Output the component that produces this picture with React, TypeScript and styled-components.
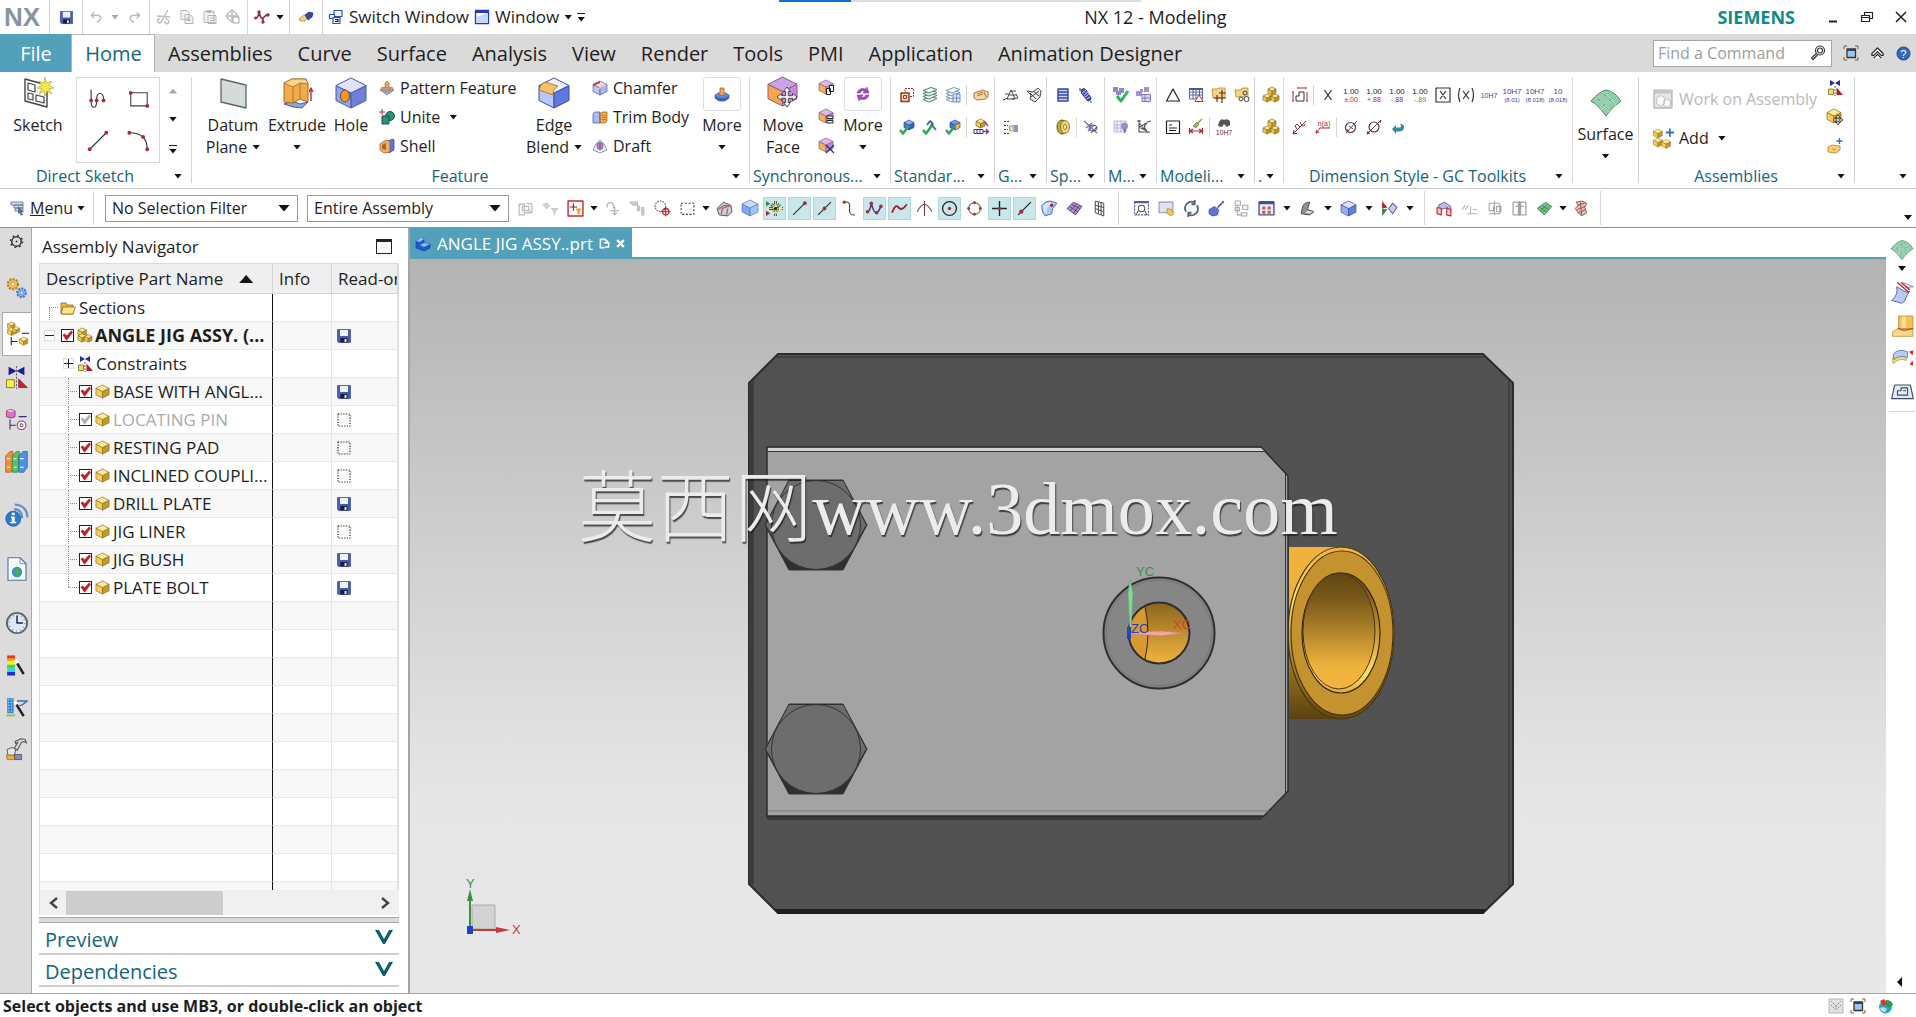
import React, { ReactNode } from "react";
import styled, { createGlobalStyle, css } from "styled-components";

const ink = "#1e1e1e";
const teal = "#14657a";
const tabBlue = "#52a0b9";
const line = "#d5d5d5";

const Global = createGlobalStyle`
  * { box-sizing: border-box; }
  html, body { margin: 0; }
  body {
    font-family: "Open Sans", "Noto Sans", "Liberation Sans", sans-serif;
    font-size: 16px;
    color: ${ink};
    background: #fff;
    overflow: hidden;
  }
  button, input, select { font: inherit; color: inherit; }
  button { background: none; border: 0; padding: 0; margin: 0; cursor: pointer; }
`;

/* ---------- drawing helpers ---------- */

const Glyph = styled.svg<{ $size: number }>`
  display: block;
  flex: none;
  width: ${(p) => p.$size}px;
  height: ${(p) => p.$size}px;
  overflow: visible;
  fill: none;
  stroke-linejoin: round;
`;

const cube = (x: number, y: number, s: number, top: string, left: string, right: string, edge: string) => {
  const h = s / 2;
  const q = s / 4;
  return (
    <g stroke={edge} strokeWidth={s > 20 ? 1 : 0.7}>
      <path fill={left} d={`M${x} ${y + q}L${x + h} ${y + h}V${y + s}L${x} ${y + s - q}Z`} />
      <path fill={right} d={`M${x + s} ${y + q}L${x + h} ${y + h}V${y + s}L${x + s} ${y + s - q}Z`} />
      <path fill={top} d={`M${x} ${y + q}L${x + h} ${y}L${x + s} ${y + q}L${x + h} ${y + h}Z`} />
    </g>
  );
};
const goldCube = (x: number, y: number, s: number) => cube(x, y, s, "#fdeb9a", "#f3cf52", "#c9982a", "#8a6a1c");
const blueCube = (x: number, y: number, s: number) => cube(x, y, s, "#dbe4fb", "#92aef0", "#5f7fd6", "#3f51a5");
const mixCube = (x: number, y: number, s: number) => cube(x, y, s, "#d9b9ec", "#f6b04d", "#c28ade", "#8d5a86");

const label = (t: string, y: number, size: number, fill: string, x = 8) => (
  <text x={x} y={y} fontSize={size} textAnchor="middle" fill={fill} stroke="none" fontFamily="Liberation Sans, Arial, sans-serif">
    {t}
  </text>
);

const dot = (x: number, y: number, r = 1.4, c = "#a92c33") => <circle cx={x} cy={y} r={r} fill={c} stroke="none" />;

const sheets = (c: string) => (
  <g stroke={c} strokeWidth=".9" fill="#f4f8f4">
    <path d="M1 12.5l8-3 6 2-8 3.5z" />
    <path d="M1 9.5l8-3 6 2-8 3.5z" />
    <path d="M1 6.5l8-3 6 2-8 3.5z" />
    <path d="M1 3.5l8-3 6 2-8 3.5z" />
  </g>
);

const tick = (x: number, y: number) => (
  <path stroke="#2fa84f" strokeWidth="2.6" d={`M${x} ${y}l3 3.5 6-8`} />
);

const surfacePatch = (s: number) => (
  <g transform={`scale(${s / 16})`}>
    <path fill="#8ed0a6" stroke="#3a8a63" strokeWidth=".5" d="M0 7Q4 2 8 1q5 1 8 6-5 3-8 8Q4 9 0 7z" />
    <path stroke="#e6f7ec" strokeWidth=".9" d="M2.500 5Q6 7 10 12.500M5.500 2.500q4 2 7.500 7M2.500 8.500Q6 4 11 2M5 11.500Q9 6 14 4.500" />
    <path stroke="#2f7d5a" strokeWidth=".4" d="M2.500 5Q6 7 10 12.500M5.500 2.500q4 2 7.500 7M2.500 8.500Q6 4 11 2M5 11.500Q9 6 14 4.500" />
  </g>
);

const floppy = (
  <g>
    <path fill="#4a5cab" stroke="#2b3a80" strokeWidth=".6" d="M1.500 1.500h13v13h-12l-1-1z" />
    <path fill="#eef1fb" d="M4 2h8v6H4z" />
    <path fill="#161d44" d="M4.500 10h7v4.500h-7z" />
    <path fill="#dfe4f5" d="M8.500 11h2v3h-2z" />
  </g>
);

const tol = (a: string, b: string, c: string, top = ink, low = 7) => (
  <>
    {label(a, 7, a.length > 4 ? 7 : 8, top)}
    {label(b, 15, low, c)}
  </>
);

const icons: Record<string, ReactNode> = {
  save: floppy,
  undo: <path stroke="#bdbdbd" strokeWidth="1.800" d="M2 6h7q4 1 3 4t-4 4M5 2.500L1.500 6 5 9.500" />,
  redo: <path stroke="#bdbdbd" strokeWidth="1.800" d="M14 6H7q-4 1-3 4t4 4M11 2.500L14.500 6 11 9.500" />,
  cut: <path stroke="#bdbdbd" strokeWidth="1.400" d="M12 1L6 11M1 7l13 1M4 10a2 2 0 1 0 1 3l2-3M9 12a2 2 0 1 0 3-1l-3-2" />,
  copy: <path stroke="#b5b5b5" fill="#f4f4f4" d="M2 1.500h6l2 2v7H2zM6 5.500h5l3 3v6H6zM8 9h3M8 11.500h4" />,
  paste: <path stroke="#b5b5b5" fill="#f4f4f4" d="M2 2.500h10v11H2zM5 1.500h4v2H5zM6 6.500h8v8H6zM8 9h4M8 11.500h4" />,
  orbit: <path stroke="#a5a5a5" d="M7 0v14M0 7h14M12 7a5 5 0 1 0-5 5M8 8h6v6H8z" />,
  spline: (
    <>
      <path stroke="#7a2f4e" strokeWidth="1.600" d="M1 9q3 1 4-6 2 8 4 6t5-4M9 9v5" />
      {dot(5, 3, 1.7)}
      {dot(9, 13, 1.7)}
      {dot(14, 6, 1.7)}
      {dot(1.5, 9, 1.5)}
    </>
  ),
  eraser: (
    <>
      <path fill="#f0d67a" stroke="#b07b2a" strokeWidth=".7" d="M1 10l5-4 5 1-4 5H2z" />
      <path fill="#3548a8" stroke="#202c74" strokeWidth=".7" d="M7 6l4-3 4 1-1 4-4 3z" />
    </>
  ),
  switchWin: (
    <g stroke="#2b53b5" fill="#f5f8ff" strokeWidth="1.200">
      <path d="M6 1.500h8v6H6z" />
      <path d="M1.500 5.500h5v4h-5z" />
      <path d="M5 8.500h7v6H5z" />
      <path stroke="#111" d="M7 10.500h3v2H7" />
    </g>
  ),
  windowPane: (
    <>
      <path fill="#f6f9ff" stroke="#1d3fb0" strokeWidth="1.300" d="M1.500 1.500h13v13h-13z" />
      <path fill="#1d3fb0" d="M1 1h14v3H1z" />
      <path fill="#c5d6f8" d="M2 8l12-4v10H2z" />
    </>
  ),
  magnifier: <path stroke="#333" strokeWidth="1.200" d="M14.500 5.500a4.500 4.500 0 1 1-9 0 4.500 4.500 0 1 1 9 0zM12.500 5.500a2.500 2.500 0 1 1-5 0 2.500 2.500 0 1 1 5 0zM6.500 8.500L1.500 13l1.500 1.500L7.500 10" />,
  fullscreen: (
    <>
      <path stroke="#333" strokeWidth="1.300" d="M4 4h8.500v8.500H4z" fill="#9fc4ea" />
      <path fill="#24466e" d="M4 4h8v2H4z" />
      <path stroke="#8a5a2b" d="M1 4V1h3M12 1h3v3M15 12v3h-3M4 15H1v-3" />
    </>
  ),
  chevrons: <path stroke="#222" fill="#fff" strokeWidth="1.200" d="M2 8l6-6 6 6v2h-2L8 6l-4 4H2zM4 13l4-4 4 4" />,
  help: (
    <>
      <circle cx="8" cy="8" r="7" fill="#3567bd" stroke="#21458a" />
      {label("?", 12.5, 12, "#fff")}
    </>
  ),
  profile: (
    <>
      <path stroke="#333" strokeWidth=".8" d="M3 1v8q0 5 2 5t2-5V8q0-4 2.500-4T12 8v2" />
      {dot(3, 9)}
      {dot(7, 9)}
      {dot(12, 9)}
    </>
  ),
  rectangle: (
    <>
      <path stroke="#444" strokeWidth=".8" d="M2 3.500h12v9.500H2z" />
      {dot(2, 3.5, 1.4)}
      {dot(14, 13, 1.4)}
    </>
  ),
  segment: (
    <>
      <path stroke="#333" strokeWidth=".8" d="M2 14L14 2" />
      {dot(2, 14, 1.4)}
      {dot(14, 2, 1.4)}
    </>
  ),
  arc: (
    <>
      <path stroke="#333" strokeWidth=".8" d="M1 2q13 0 13 12" />
      {dot(1, 2, 1.4)}
      {dot(11, 5, 1.4)}
      {dot(14, 14, 1.4)}
    </>
  ),
  pattern: (
    <>
      <path fill="#9fb4e4" stroke="#4c5fa8" strokeWidth=".6" d="M1 10l7-4 7 4-7 5z" />
      <path fill="#f2a65a" stroke="#a5602a" strokeWidth=".6" d="M6 3l2-2 2 2v4l-2 1-2-1zM2 8l2-1 1 1v2l-2 1zM11 8l2-1 1 2-1 2-2-1zM6 10l2-1 2 1v2H6z" />
    </>
  ),
  unite: (
    <>
      <circle cx="11" cy="7" r="4.500" fill="#2f8f7d" stroke="#145548" />
      <path fill="#2f8f7d" stroke="#145548" d="M3 7h7v8H3z" />
      <path stroke="#c42b2b" d="M3 0v6M0 3h6" />
    </>
  ),
  shell: (
    <>
      <path fill="#5f78d8" stroke="#33458f" strokeWidth=".7" d="M9 3l5-2 1 1v10l-5 3z" />
      <path fill="#f2ae5b" stroke="#83542f" strokeWidth=".7" d="M1 6l6-4 4 1v11l-6 1-4-3z" />
      <path fill="#b0612a" d="M3 7l4-2v7l-4-1z" />
    </>
  ),
  chamfer: (
    <>
      {cube(1, 1, 14, "#e9d8f4", "#b9c9f3", "#a8b8ef", "#5b5f9e")}
      <path fill="#c43a50" d="M1 4l7-3v2L1 6z" />
      <path fill="#f4c77e" d="M7 7l7-3v2L7 9z" />
    </>
  ),
  trim: (
    <>
      <path fill="#a9bdf2" stroke="#3f51a5" strokeWidth=".7" d="M1 5l2-2h5v11H1z" />
      <path fill="#f0a94e" stroke="#9a5a1d" strokeWidth=".7" d="M8 5l2-2h5v9l-2 2H8z" />
      <path stroke="#c42b2b" strokeDasharray="1 1" d="M8 4v10M11 6v6M13 6v6" />
    </>
  ),
  draft: (
    <>
      <path fill="#eef0fa" stroke="#777aa8" strokeWidth=".8" d="M1 12l3-6 4-4 4 4 3 6-7 3z" />
      <path fill="#a98ed6" stroke="#5c4a91" strokeWidth=".6" d="M5 6l3-2 3 2v4l-3 2-3-2z" />
      <path stroke="#c42b2b" d="M8 4v8" />
    </>
  ),
  pad: (
    <>
      <path fill="#5d8be0" stroke="#28509e" strokeWidth=".7" d="M1 9l4-2h6l4 2v3l-4 3H5l-4-3z" />
      <path fill="#3b63b8" d="M1 10l4 2h6l4-2v2l-4 3H5l-4-3z" />
      <path fill="#f0a94e" stroke="#9a5a1d" strokeWidth=".7" d="M6 2h4v5h2l-4 3-4-3h2z" />
    </>
  ),
  cycle: (
    <path fill="#a44cc0" stroke="#7a2f96" strokeWidth=".5" d="M2 7q2-6 9-4l1-2 2 6H8l2-2Q6 4 5 7zM14 9q-2 6-9 4l-1 2-2-6h6l-2 2q4 1 5-2z" />
  ),
  faceCopy: (
    <>
      {mixCube(0, 0, 14)}
      <path fill="#fff" stroke="#222" d="M10.500 5.500h4v6h-4zM7.500 8.500h4v6h-4z" />
    </>
  ),
  faceAlign: (
    <>
      {mixCube(0, 0, 14)}
      <path fill="#fff" stroke="#222" d="M8 7h6v2.500H8zM8 11.500h6V14H8z" />
    </>
  ),
  faceDelete: (
    <>
      {mixCube(0, 0, 14)}
      <path stroke="#2a2f86" strokeWidth="1.300" d="M7 7l8 8M15 7l-8 8" />
    </>
  ),
  redBoxes: (
    <>
      <path stroke="#b3262e" strokeDasharray="2 1" d="M6 1.500h8.500v8H6z" />
      <path stroke="#8d3d1e" strokeWidth="1.500" fill="#f7d9c2" d="M2 6h8v8.500H2z" />
      <path stroke="#8d3d1e" d="M4.500 8.500h3v3h-3z" />
    </>
  ),
  layersGreen: sheets("#3d6f5d"),
  layersBlue: (
    <>
      {sheets("#6f8bb0")}
      <path fill="#e2e9fb" stroke="#5b72b8" strokeWidth=".8" d="M8 7h7v8H8zM8 11h7M11.500 7v8" />
    </>
  ),
  folderTilt: <path fill="#f5d9a0" stroke="#a8672a" strokeWidth=".9" d="M1 6l9-3 5 2v5l-3 2-8 1-3-2zM4 7l6-2M4 9l6-2M11 5l2 5" />,
  checkBlue: (
    <>
      {cube(5, 1, 10, "#8db4f8", "#4a78dc", "#3560c0", "#2a4c98")}
      {tick(1, 11)}
    </>
  ),
  checkWrench: (
    <>
      <path stroke="#45609a" strokeWidth="1.800" d="M5 6l3-4 3 3-3 3M9 5l5 6" />
      {tick(1, 11)}
    </>
  ),
  checkGold: (
    <>
      {cube(5, 1, 10, "#6a9bf0", "#3c6fd8", "#f4b43d", "#2a4c98")}
      {tick(1, 11)}
    </>
  ),
  export: (
    <>
      {goldCube(3, 0, 9)}
      <path fill="#fff" stroke="#4a2b9a" d="M1 10.500h9v4H1zM4 10.500v4M7 10.500v4" />
      <path stroke="#8f2bb0" strokeWidth="1.300" d="M10 12.500h5M13 10l2.500 2.500L13 15M12 3l3 4" />
    </>
  ),
  gearA: <path stroke="#4c4c4c" d="M0 13l5-2M4 12l4-9 4 9zM6 8h8M9 12l6-1-2-4M7 4h6M2 7h4" />,
  gearB: <path stroke="#4c4c4c" fill="#e8e8e8" d="M1 4l6 1 5-4 3 3-1 6-5 5-5-3 1-4zM4 6l6 6M7 4l6 5M5 10l8-6" />,
  handList: (
    <>
      <path stroke="#7a2430" strokeDasharray="2 1" d="M1 2.500h5M1 6.500h4M1 10.500h4M1 14.500h5" />
      <path fill="#e8dba8" stroke="#888" strokeWidth=".7" d="M6 7h4l1-1v6H7z" />
      <path fill="#8b97cf" d="M11 6h4v7h-4z" />
    </>
  ),
  springV: <path stroke="#3343a8" strokeWidth="1.400" fill="#cdd5f5" d="M3 2h10v3H3zM3 5h10v3H3zM3 8h10v3H3zM3 11h10v3H3z" />,
  springD: (
    <>
      <path fill="#4052b8" stroke="#28348a" d="M3 3q3-3 5 0l5 8q0 3-3 3L4 7z" />
      <path stroke="#c9d0f5" d="M4 6l4-3M6 8l4-3M7 10l4-3M9 12l3-2" />
      <path stroke="#28348a" d="M2 1v3M13 14v2" />
    </>
  ),
  ring: (
    <>
      <ellipse cx="7" cy="8" rx="5" ry="7" fill="#c9a92e" stroke="#6a5612" />
      <ellipse cx="10" cy="8" rx="4.500" ry="6.500" fill="#ecd86a" stroke="#6a5612" strokeWidth=".7" />
      <ellipse cx="10" cy="8" rx="1.500" ry="2.500" fill="#fff" stroke="#6a5612" strokeWidth=".7" />
    </>
  ),
  springCut: (
    <>
      <path stroke="#6c73b5" strokeWidth="1.300" d="M1 2l13 12M3 9l6-5M5 12l6-6M8 14l6-6" />
      <ellipse cx="10" cy="9" rx="4" ry="3" stroke="#555" />
    </>
  ),
  checkParts: (
    <>
      <path fill="#8f88cf" d="M0 0h5v5H0zM6 1h5v5H6zM3 4h5v4H3z" />
      <path stroke="#2fb457" strokeWidth="3" d="M4 9l4 5 7-10" />
    </>
  ),
  partTree: (
    <>
      <path fill="#9a95d4" d="M0 4h6v5H0zM8 0h5v5H8zM4 2h3v3H4z" />
      <path fill="#ddd9f2" stroke="#7c76b8" d="M6 7.500h8.500v7H6zM9 7v8M6 11h8" />
    </>
  ),
  gridBolt: (
    <>
      <path fill="#f0f2fa" stroke="#9aa3c8" strokeWidth=".7" d="M1 2h12v11H1zM1 6h12M1 9h12M4 2v11M8 2v11" />
      <circle cx="11.500" cy="7" r="3.500" fill="#958fcc" />
      <path fill="#6e68b0" d="M10 10h3l-1 5z" />
    </>
  ),
  compass: <path stroke="#44505c" strokeWidth="1.100" d="M3 1v12h11M3 4l9 10M3 8l8-4q-5 4 0 8M1 2h4M11 3l4-1M3 8l8 4" />,
  delta: <path stroke="#222" strokeWidth="1.200" d="M8 2l6.500 12h-13z" />,
  tableRed: (
    <>
      <path fill="#fff" stroke="#4a559c" strokeWidth=".9" d="M1.500 2h13v10h-13zM1.500 5h13M1.500 8h13M5 2v10M8 2v10M11.500 2v10" />
      <path fill="#4a559c" d="M1 1h14v2H1z" />
      <path fill="#fff" stroke="#c42b2b" d="M11 8l4 6.500H7z" />
    </>
  ),
  noteCross: (
    <>
      <path fill="#f4d68a" stroke="#b8862a" strokeWidth=".8" d="M1 2h5l1-1h7v10H2z" />
      <path stroke="#6b2a1a" strokeWidth="1.200" d="M6 8v7M3 11h12M11 3v13M8 6h7" />
    </>
  ),
  noteGear: (
    <>
      <path fill="#f4d68a" stroke="#b8862a" strokeWidth=".8" d="M1 3h6l1-2h6v9H2z" />
      <circle cx="11" cy="6" r="2" stroke="#444" />
      <circle cx="12.500" cy="12" r="2.500" stroke="#444" fill="#fff" />
      <circle cx="7" cy="12" r="2" stroke="#444" fill="#fff" />
    </>
  ),
  doc: <path stroke="#222" strokeWidth="1.200" d="M1.500 2h13v12.500h-13zM4 6h3M4 9h8M4 11.500h7" />,
  dimBrush: (
    <>
      <path stroke="#b3262e" strokeWidth="1.200" d="M1.500 9v6M14.500 9v6M2 12h12M5 10l-3 2 3 2M11 10l3 2-3 2" />
      <path fill="#9fb07a" stroke="#667a3c" strokeWidth=".7" d="M5 7l4-4 2 2-3 4z" />
      <path stroke="#c78a32" strokeWidth="1.500" d="M10 4l4-4" />
    </>
  ),
  bino: (
    <>
      <path fill="#555" d="M3 3q2-4 5-2 3-2 6 1v4l-3 2-3-3-2 3-4-1z" />
      {label("10H7", 15.5, 7, "#7a1f26")}
    </>
  ),
  goldStack: (
    <>
      {goldCube(5, 0, 8)}
      {goldCube(0, 7, 8)}
      {goldCube(8, 7, 8)}
    </>
  ),
  dimShape: (
    <>
      <path stroke="#b3262e" d="M1 5v9M0 5h2M0 14h2M6 1h8M6 0v2M14 0v2M15 5v9M14 14h2" />
      <path stroke="#333" d="M4 14v-5h3V5h5v9z" />
    </>
  ),
  xPlain: <path stroke="#333" strokeWidth="1.300" d="M4.500 3l7 10M11.500 3l-7 10" />,
  xBox: <path stroke="#333" strokeWidth="1.200" d="M5 4l6 8M11 4l-6 8M1 1h14v14H1z" />,
  xParen: <path stroke="#333" strokeWidth="1.200" d="M5 4l6 8M11 4l-6 8M2 1q-3 7 0 14M14 1q3 7 0 14" />,
  tolA: tol("1.00", "±.00", "#b3262e"),
  tolB: tol("1.00", "+.88", "#b3262e"),
  tolC: tol("1.00", "-.88", "#8a3038"),
  tolD: tol("1.00", "-.89", "#777"),
  h7: label("10H7", 11, 7, "#3d3db0"),
  h7a: tol("10H7", "(8.01)", "#3d3db0", "#3d3db0", 6),
  h7b: tol("10H7", "(8.018)", "#3d3db0", "#3d3db0", 6),
  h7c: tol("10", "(8.018)", "#3d3db0", "#3d3db0", 6),
  slash: <path stroke="#8a3038" d="M1 15L14 2M1 15l1-4M1 15l4-1M3 7l2 3M5 5l3 3M8 3l2 4M3 7l2-2M10 7q2 1 3-2" />,
  note: (
    <>
      <path stroke="#b3262e" d="M1 14l4-5h10M1 14l.5-3M1 14l3-1" />
      {label("n(a)", 7, 7, "#b3262e", 9)}
    </>
  ),
  diaA: (
    <>
      <circle cx="7.500" cy="8.500" r="5" stroke="#444" strokeWidth="1.200" />
      <path stroke="#8a3038" d="M3 14L14 2M6 7l4 3M4 10l1 3" />
    </>
  ),
  diaB: (
    <>
      <circle cx="8" cy="8" r="5" stroke="#444" strokeWidth="1.200" />
      <path stroke="#8a3038" d="M1 15L15 1M1 15l1-3M1 15l3-1M15 1l-1 3" />
    </>
  ),
  back: <path fill="#35909a" d="M3 10l4-4v2.500h4q2-1 0-4 5 1 4 5-1 3-5 3H7V15z" />,
  mirror: (
    <>
      <path fill="#2b2a9c" d="M3 0v6l5-3zM13 0v6L8 3z" />
      <path fill="#f5e04c" stroke="#6b5a10" strokeWidth=".7" d="M1.500 9h5v5.500h-5z" />
      <path fill="#a91f2c" d="M9.500 7.500v7.500H16z" />
      <path stroke="#333" strokeDasharray="2 1" strokeWidth=".8" d="M8 6v10" />
    </>
  ),
  moveComp: (
    <>
      {goldCube(0, 0, 14)}
      <path stroke="#222" fill="#fff" strokeWidth=".8" d="M11 6l2 2.500h-1.200v1.700h1.700V9L16 11l-2.500 2v-1.200h-1.700v1.700H13L11 16l-2-2.500h1.200v-1.700H8.500V13L6 11l2.500-2v1.200h1.700V8.500H9z" />
    </>
  ),
  addRow: (
    <>
      <path fill="#f6cf78" stroke="#b77a28" strokeWidth=".8" d="M1 9l4-2 8 1v4l-4 3-8-1zM5 11l4 1" />
      <path stroke="#2c71c9" strokeWidth="1.300" d="M12.500 0v6M9.500 3h6" />
    </>
  ),
  menu: (
    <>
      <path fill="#d7def0" stroke="#5f6c94" strokeWidth=".8" d="M1 2h12v3H1zM4 5h9v3H4zM5 8h8v3H5z" />
      <path fill="#5f6c94" d="M8 6l6 6-2 .5 1 2.500-2 .5-1-2.500-2 1z" />
    </>
  ),
  greyPart: <path stroke="#bdbdbd" strokeWidth="1.200" d="M2 4h5v10H2zM5 6h6v4H5zM9 3l5 1v8l-4-3M8 12h5" />,
  greyHook: <path stroke="#c8c8c8" fill="#d8d8d8" d="M1 4l4-1 2 3-3 2zM9 8h6l-3 3v3l-1-3z" />,
  redFilter: (
    <>
      <path fill="#fff" stroke="#c4272f" strokeWidth="1.300" d="M1 1h14v14H1z" />
      <path stroke="#7a2430" d="M6 3v7M2.500 6.500h7" />
      <path fill="#f0a02e" d="M8 8h6l-2 3v3l-2-1v-2z" />
    </>
  ),
  greyTurn: <path stroke="#b5b5b5" strokeWidth="1.200" d="M3 7V4q4-4 6 1v3M6 10h8M10 6v8M8 12l2 2 2-2" />,
  greyBars: <path stroke="#bdbdbd" fill="#cfcfcf" d="M1 2h7v3H4zM8 6h2v4H8zM12 7h2v7h-2z" />,
  targetRed: (
    <>
      <circle cx="6" cy="6" r="5" stroke="#555" strokeDasharray="1.500 1" />
      <circle cx="11" cy="11" r="3" stroke="#a92c33" strokeWidth="1.200" />
      <path stroke="#a92c33" d="M11 6.500v9M6.500 11h9" />
    </>
  ),
  marquee: <path stroke="#444" strokeDasharray="2 1.500" d="M2 3h12v10.500H2z" />,
  shadeCube: (
    <>
      <path fill="#cfd0da" stroke="#4d4a5a" strokeWidth=".9" d="M1 8l6-6 7 3 1 6-4 4-8-1z" />
      <path stroke="#a9626c" strokeWidth="1.200" d="M2 9l6-4 6 1M5 13l1-5 5-2M10 14l1-6" />
    </>
  ),
  blueGlass: cube(1, 0, 15, "#c5dcfb", "#7fa6ee", "#a4c5f7", "#5778c5"),
  snap: (
    <>
      <path stroke="#222" strokeWidth="2.600" strokeDasharray="3 3" d="M9 1v14M3 8h13M5 4l8 8M13 4l-8 8" />
      <path stroke="#e9d93a" strokeWidth="1.400" strokeDasharray="3 3" d="M9 1v14M3 8h13M5 4l8 8M13 4l-8 8" />
      <circle cx="9" cy="8" r="1.500" fill="#222" />
      <path fill="#2f8f4b" d="M0 1l4 2.500L0 6z" />
      <path fill="#b3262e" d="M0 10l4 2.500L0 15z" />
    </>
  ),
  ends: (
    <>
      <path stroke="#333" strokeWidth="1.200" d="M2 14L14 2" />
      {dot(13, 3, 1.8)}
    </>
  ),
  mid: (
    <>
      <path stroke="#333" strokeWidth="1.200" d="M2 14L14 2" />
      {dot(8, 8, 1.8)}
    </>
  ),
  sCurve: (
    <>
      <path stroke="#444" d="M3 2q6-1 5 5-1 8 5 7" />
      {dot(3, 2, 1.5)}
    </>
  ),
  zig: (
    <>
      <path stroke="#4a2b9a" strokeWidth="1.400" d="M1 11q3 0 4-8 2 9 5 9 2-1 4-6" />
      {dot(1.5, 11, 1.7)}
      {dot(5, 3, 1.7)}
      {dot(10, 12, 1.7)}
      {dot(14, 6, 1.7)}
    </>
  ),
  wave: <path stroke="#9c2430" strokeWidth="1.800" d="M1 12q3-9 6-5t8-3" />,
  fan: <path stroke="#7a3a3a" d="M8 1v14M1 11q4-7 7-7t7 7" />,
  circleDot: (
    <>
      <circle cx="8" cy="8" r="6.500" stroke="#222" strokeWidth="1.200" />
      {dot(8, 8, 1.6)}
    </>
  ),
  circleRed: (
    <>
      <circle cx="8" cy="8" r="5.500" stroke="#8f5555" />
      {dot(8, 2.5, 1.4)}
      {dot(8, 13.5, 1.4)}
      {dot(2.5, 8, 1.4)}
      {dot(13.5, 8, 1.4)}
    </>
  ),
  plus: (
    <>
      <path stroke="#222" strokeWidth="1.300" d="M8 1v14M1 8h14" />
      {dot(8, 8, 1.6)}
    </>
  ),
  onCurve: (
    <>
      <path stroke="#222" strokeWidth="1.200" d="M2 14L14 2" />
      {dot(5, 11, 2)}
    </>
  ),
  bluePatch: (
    <>
      <path fill="#a9c8f2" stroke="#4d6db5" strokeWidth=".9" d="M1 5q3-4 8-4l6 2-4 5-1 5-6 2Q0 11 1 5z" />
      <path fill="#d5e5fb" d="M2 5q3-3 7-3l3 1-6 4-1 6-2-2Q1 8 2 5z" />
      {dot(10, 5, 1.6)}
    </>
  ),
  violetPatch: <path fill="#b58fd0" stroke="#4a3a6e" strokeWidth=".8" d="M1 8l6-6 8 4-6 8zM3 6l8 5M5 4l8 4M4 10l6-6M7 12l6-7" />,
  gridDark: <path stroke="#444" strokeWidth=".9" d="M4 1l8 2v12l-8-3zM4 5l8 2M4 8l8 3M7 2v11M9.500 2v12" />,
  fitView: (
    <>
      <path stroke="#4a5a9c" strokeDasharray="2 1" d="M1.500 2h13v12h-13z" />
      <path fill="#4a5a9c" d="M1 1h14v2H1z" />
      <circle cx="8" cy="8" r="3" stroke="#555" />
      <path stroke="#555" d="M5 10l-2 4M11 10l2 4" />
    </>
  ),
  zoomWin: (
    <>
      <path fill="#dde3ef" stroke="#8f97ab" d="M1 2h13v10H1z" />
      <path fill="#f1c561" stroke="#b3842a" strokeWidth=".7" d="M9 8l4 1 2 4-3 2-4-3z" />
    </>
  ),
  rotate: <path stroke="#4d6488" strokeWidth="1.700" d="M3 11A6 6 0 0 1 11 2.500M13 5a6 6 0 0 1-8 8.500M11 0v4H8M5 16v-4h3" />,
  paint: (
    <>
      <path fill="#6474d8" stroke="#39479f" strokeWidth=".7" d="M1 9l5-3 4 3-1 5-5 1-3-2z" />
      <path stroke="#39479f" strokeWidth="1.400" d="M9 7l4-4" />
      {dot(14, 2, 1.2, "#5a6cd0")}
    </>
  ),
  treeGrey: <path stroke="#a9a9a9" fill="#f5f5f5" d="M2 1h5v4H2zM4 5v9h4M8 12h5v3H8zM2 7h4v3H2zM9 5h5v4H9z" />,
  layout: (
    <>
      <path fill="#eef1fb" stroke="#3e4da0" strokeWidth="1.300" d="M1 2h14v12H1z" />
      <path fill="#3e4da0" d="M1 1h14v3H1z" />
      <path fill="#cc5a4a" d="M4 6h3v3H4zM9 6h3v3H9zM4 10h3v3H4zM9 10h3v3H9z" />
    </>
  ),
  orient: (
    <>
      <path fill="#8e9298" stroke="#3c3f44" strokeWidth=".8" d="M3 8q1-6 7-6l-2 7 6 2-4 3-8-1z" />
      <path fill="#dfe2e6" d="M8 10l5 1-3 2-4-1z" />
    </>
  ),
  shaded: blueCube(1, 1, 14),
  arrowsRG: (
    <>
      <path fill="#b3262e" d="M1 1l5 6-5 1z" />
      <path fill="#2f8f4b" d="M1 15l5-6-5-1z" />
      <path fill="#cfc7ea" stroke="#6b62a8" d="M11 3l4 4-4 6-4-5z" />
    </>
  ),
  clip: (
    <>
      <path fill="#c9b6e8" stroke="#5b4ba8" strokeWidth=".8" d="M2 5l6-3 6 4v5l-3-2V7L5 9z" />
      <path fill="#f3c9c4" stroke="#b3262e" d="M1 7l4 1v6l-4-1zM10 8l4 1v6l-4-1z" />
    </>
  ),
  greyDim: <path stroke="#b5b5b5" d="M1 9l3-4M4 9l3-4M9 6v7M6 13h9M11 9h4" />,
  greyBalance: <path stroke="#a5a5a5" d="M3 3h10M8 1v13M3 3v7h4V6M13 4v9H3M10 6h4v5h-4z" />,
  greyBook: <path stroke="#a5a5a5" strokeWidth="1.200" d="M2 2h5v12H2zM9 2h5v12H9zM4 6h3M9 6h3M8 1v14" />,
  greenPatch: <path fill="#7cc492" stroke="#2f7d4a" strokeWidth=".7" d="M1 8l8-6 6 4-7 8zM3 6.500l7 5M5 5l7 4M4 10l7-6M6 12l7-7" />,
  redPatch: <path fill="#e0c0b8" stroke="#a5544a" strokeWidth=".9" d="M3 2l5-1 5 2-2 4 2 5-5 3-3-3-3-4 3-3zM4 5l7-2M4 9l8-3M5 12l7-3M7 2l1 12" />,
  part: goldCube(1, 1, 14),
  folder: (
    <>
      <path fill="#e9b93c" stroke="#8a6a1c" strokeWidth=".8" d="M1 3h5l1 2h6v9H1z" />
      <path fill="#fbe489" stroke="#8a6a1c" strokeWidth=".8" d="M3 7h12.500L13 14H1z" />
    </>
  ),
  assembly: (
    <>
      {goldCube(1, 0, 9)}
      {goldCube(1, 6, 9)}
      {goldCube(8, 7, 8)}
    </>
  ),
  dotted: <path stroke="#333" strokeDasharray="1.300 1.300" strokeWidth="1.200" d="M2 2h12v12H2z" />,
  gear: (
    <>
      <circle cx="8" cy="8" r="5" stroke="#333" strokeWidth="1.600" />
      <circle cx="8" cy="8" r="6.500" stroke="#333" strokeWidth="1.400" strokeDasharray="2 3.100" />
      <circle cx="8" cy="8" r="1" fill="#333" />
    </>
  ),
  grayTree: (
    <>
      <path fill="#e2e2e2" stroke="#aaa" strokeWidth=".8" d="M1 1h14v14H1z" />
      <path stroke="#888" strokeDasharray="1.500 1" d="M3 3l5 5 5-5M8 8v5M3 7l4 4M13 7l-4 4" />
    </>
  ),
  globe: (
    <>
      <circle cx="7.500" cy="9" r="6.500" fill="#31a4c4" />
      <path fill="#2e9b53" d="M8 2q6 0 7 5l-4 3-3-2z" />
      <path fill="#d9342b" d="M2 3l4-2 3 5-4 2z" />
      <path fill="#e8f6fa" d="M2 10q4-2 7 1l-2 3q-4 0-5-4z" opacity=".7" />
    </>
  ),
  partDoc: (
    <>
      <path fill="#1e57d0" stroke="#103c9c" strokeWidth=".6" d="M1 5l5-4 3 2v4l6 1v4l-6 3-8-3z" />
      <path fill="#8fb8ff" d="M1 5l5-4 3 2-4 3zM9 7l6 1-6 3-4-2z" />
    </>
  ),
};

const bigIcons: Record<string, ReactNode> = {
  sketch: (
    <>
      <path fill="#f7faf7" stroke="#444" strokeWidth="1.400" d="M3 2l22 6v22L3 24z" />
      <path stroke="#444" strokeWidth="1.200" d="M6 6l7 2v7l-7-2zM6 16l5 1v6l-5-1zM14 18l8 2v6l-8-2z" />
      <path fill="#f3ea4a" stroke="#a8a02a" strokeWidth=".6" d="M23 0l1.500 6 5-2-2.500 5 5 2-5 1 3 5-5-3-2 5-1-5-5 3 3-5-5-1 5-2-3-5 5 2z" />
    </>
  ),
  datum: <path fill="#d5dbd8" stroke="#5d6663" strokeWidth="1.300" d="M4 2l25 6v23L4 25z" />,
  extrude: (
    <>
      <path fill="#8fa3dc" stroke="#4c5fa8" d="M3 27l9-3 7 3 8-2-6 6-9-1z" />
      <path fill="#f2ab4a" stroke="#a56a1d" d="M3 6l8-4h14l2 5v18l-8-3-7 4-9-1z" />
      <path fill="#fbd492" stroke="#a56a1d" strokeWidth=".8" d="M3 6l8-4h14l2 5-8-1-7 4z" />
      <path stroke="#a56a1d" strokeWidth=".8" d="M12 10v16M19 6v16" />
      <path stroke="#c42b2b" strokeWidth="1.400" d="M30 24V12M28 15l2-4 2 4" />
    </>
  ),
  hole: (
    <>
      {cube(1, 1, 30, "#dfe4fb", "#93a5ee", "#6f80da", "#4a56a8")}
      <ellipse cx="10" cy="19" rx="4.500" ry="6" fill="#f0982e" stroke="#7a4a14" />
    </>
  ),
  blend: (
    <>
      {cube(1, 1, 30, "#eef1fd", "#b8c9f8", "#5f78dc", "#3b4da6")}
      <path fill="#f7c06a" stroke="#a56a1d" strokeWidth=".8" d="M1 13q1-6 6-8l13 4q-5 3-5 9z" />
    </>
  ),
  moveFace: (
    <>
      {cube(1, 0, 29, "#c9a3e6", "#f6a64a", "#c58be0", "#8d5a86")}
      <path fill="#fff" stroke="#444" d="M20 10l3.500 4.500h-2.200v4.200h4.200v-2.200L30 20l-4.500 3.500v-2.200h-4.200v4.200h2.200L20 30l-3.500-4.500h2.200v-4.200h-4.200v2.200L10 20l4.500-3.500v2.200h4.200v-4.200h-2.200z" />
    </>
  ),
  surface: surfacePatch(32),
  workOn: (
    <>
      <path fill="#e6e6e6" stroke="#b5b5b5" strokeWidth="2" d="M3 3h26v26H3z" />
      <path fill="#c5c5c5" d="M3 3h26v5H3z" />
      <path fill="#fafafa" stroke="#b0b0b0" d="M7 14l6-3 5 3v9l-5 3-6-3zM17 19l5-3 5 3v6l-5 3-5-3z" />
    </>
  ),
  add: (
    <>
      {goldCube(2, 3, 13)}
      {goldCube(2, 16, 13)}
      {goldCube(14, 18, 13)}
      <path stroke="#2c71c9" strokeWidth="2.600" d="M26 2v12M20 8h12" />
    </>
  ),
  gears: (
    <>
      <circle cx="11" cy="10" r="7" fill="#f1c75c" stroke="#b3812c" strokeWidth="3" strokeDasharray="3 1.500" />
      <circle cx="11" cy="10" r="2.500" fill="#fff" stroke="#b3812c" />
      <circle cx="23" cy="22" r="6" fill="#8db2ec" stroke="#4c78c4" strokeWidth="3" strokeDasharray="3 1.500" />
      <circle cx="23" cy="22" r="2" fill="#fff" stroke="#4c78c4" />
    </>
  ),
  navTree: (
    <>
      {goldCube(2, 0, 10)}
      {goldCube(2, 7, 11)}
      {goldCube(9, 6, 9)}
      {goldCube(18, 20, 11)}
      <path stroke="#222" strokeWidth="1.400" d="M21 15h10M7 20v11M7 26h8" />
    </>
  ),
  constraint: (
    <>
      <path fill="#1c1c9c" d="M5 1v12l11-6zM27 1v12L16 7z" />
      <path fill="#f5ee4c" stroke="#6b5a10" d="M2 19h11v11H2z" />
      <path fill="#c4272f" stroke="#7a1720" d="M19 18v12h12z" />
      <path stroke="#333" strokeDasharray="3 2" d="M16 0v32" />
    </>
  ),
  partNav: (
    <>
      <path fill="#d872c4" stroke="#7a2a6a" d="M2 4v8q6 4 12 0V4q-6-4-12 0z" />
      <path fill="#f2b8e6" d="M3 4q5-3 10 0-5 3-10 0z" />
      <path stroke="#3a2a6e" strokeWidth="1.500" d="M19 12h11M7 16v14M7 24h8" />
      <circle cx="23" cy="24" r="6" stroke="#8a3a6a" strokeWidth="1.400" fill="#fff" />
      <circle cx="23" cy="24" r="2" stroke="#8a3a6a" strokeWidth="1.400" />
    </>
  ),
  books: (
    <>
      <path fill="#f08a3c" stroke="#b3561a" d="M1 8l6-6h4v24l-3 5H1z" />
      <path fill="#56c25a" stroke="#2b8a34" d="M10 8l6-6h4v24l-3 5h-7z" />
      <path fill="#4a94e0" stroke="#235ea8" d="M19 8l6-6h6v22l-5 7h-7z" />
      <path stroke="#fff" strokeWidth="1.500" d="M3 12h4M3 24h4M12 12h4M12 24h4M21 12h5M21 24h5" />
    </>
  ),
  info: (
    <>
      <path stroke="#5f8fc9" strokeWidth="3" d="M12 8q10 0 11 12M13 2q16 1 17 17" />
      <circle cx="11" cy="21" r="10" fill="#2b7bd4" stroke="#155099" />
      <path fill="#fff" d="M9 13h4v3H9zM8 18h5v7h2v2H7v-2h2v-5H8z" />
    </>
  ),
  webDoc: (
    <>
      <path fill="#f7fbff" stroke="#4a78a8" strokeWidth="1.500" d="M4 1h16l8 8v22H4z" />
      <path stroke="#4a78a8" d="M20 1v8h8" />
      <circle cx="16" cy="20" r="7" fill="#3d8fd0" />
      <path fill="#3fae5a" d="M12 16l5-2 4 5-4 7-3-2z" />
    </>
  ),
  clock: (
    <>
      <circle cx="16" cy="16" r="13.500" fill="#dfe8f4" stroke="#5a6676" strokeWidth="2.500" />
      <path stroke="#1d2a44" strokeWidth="2" d="M16 6v10h8" />
      <circle cx="16" cy="16" r="10.500" stroke="#7a8698" strokeDasharray="1 4.500" strokeWidth="2" />
    </>
  ),
  rainbow: (
    <>
      <path fill="#e23a20" d="M3 2h11v5H3z" />
      <path fill="#f5a21e" d="M3 6h11v4H3z" />
      <path fill="#f2f02a" d="M3 10h11v5H3z" />
      <path fill="#3ddc3a" d="M3 15h11v5H3z" />
      <path fill="#2ad4e0" d="M3 20h11v5H3z" />
      <path fill="#1c2ed0" d="M3 25h11v5H3z" />
      <path stroke="#fff" strokeWidth="5" d="M14 8l4 6" />
      <path stroke="#222" strokeWidth="3.500" d="M17 13l9 15" />
    </>
  ),
  wand: (
    <>
      <path fill="#3e86d6" d="M3 3h9v21H3z" />
      <path stroke="#a9ccf2" strokeWidth="1.500" strokeDasharray="2 2" d="M5 4v19M9 4v19" />
      <path stroke="#8fc06a" strokeWidth="3" d="M2 27h12" />
      <path stroke="#3a6ea8" strokeWidth="2" d="M17 7h14l-8 6h-3" />
      <path stroke="#fff" strokeWidth="4" d="M13 8l3 4" />
      <path stroke="#222" strokeWidth="3.500" d="M16 12l10 16" />
    </>
  ),
  robot: (
    <>
      <path fill="#d8d8e0" stroke="#555" strokeWidth="1.500" d="M14 5l8-4 6 1 2 5-3-2-4 1-6 11-4-3 5-8-3 2z" />
      <path fill="#e4e4ee" stroke="#555" strokeWidth="1.300" d="M3 16l7-3 5 3-2 8H4z" />
      <path fill="#f0b040" stroke="#9a6a1c" d="M2 24h10l2 6H3z" />
      <path fill="#8a8ab8" stroke="#444" d="M13 23h10v7H14z" />
    </>
  ),
  bend: (
    <>
      <path fill="#b9cbf4" stroke="#4f64b0" strokeWidth="1.300" d="M8 8l10 6q5 3 8 0-4 6-7 14l-4 3-14-4q9-7 7-19z" />
      <path stroke="#c4272f" strokeWidth="2" d="M9 2l16 14M14 2l12 10" />
      <path stroke="#4f64b0" d="M16 2l15 6-11 1" />
    </>
  ),
  goldBlock: (
    <>
      <path fill="#f6c35a" stroke="#b37a20" d="M10 0h22v20H10z" />
      <path fill="#fbe0a2" d="M15 1h6v18h-6z" />
      <path fill="#fbd98a" stroke="#b37a20" d="M1 24l8-5h23v12H1z" />
      <path stroke="#c4272f" strokeWidth="1.600" d="M9 19q6 5 23 0" />
    </>
  ),
  sheetArrows: (
    <>
      <path fill="#f2e36a" stroke="#a8982a" d="M2 16q8-8 19-4v8q-10-4-18 5z" />
      <path fill="#b9cbf4" stroke="#4f64b0" d="M3 11q8-8 20-3v8Q12 12 4 19z" />
      <path fill="#c4272f" d="M25 8l6-2-1 7zM26 26l4-6 1 7z" />
    </>
  ),
  drafting: (
    <>
      <path fill="#e4eaf2" stroke="#3f4c66" strokeWidth="1.600" d="M5 7h22l4 19H1z" />
      <path stroke="#3f4c66" strokeWidth="1.500" d="M9 21v-6h5v-4h9v10zM17 15h4" />
    </>
  ),
};

const Icon = ({ n, s = 16 }: { n: string; s?: number }) => (
  <Glyph $size={s} viewBox="0 0 16 16" aria-hidden="true">{icons[n]}</Glyph>
);
const BigIcon = ({ n, s = 32 }: { n: string; s?: number }) => (
  <Glyph $size={s} viewBox="0 0 32 32" aria-hidden="true">{bigIcons[n]}</Glyph>
);

/* ---------- shared controls ---------- */

const Caret = styled.span<{ $faint?: boolean; $up?: boolean; $bar?: boolean }>`
  display: inline-block;
  flex: none;
  width: 8px;
  height: ${(p) => (p.$bar ? 9 : 5)}px;
  border-top: ${(p) => (p.$bar ? `1px solid ${ink}` : "0")};
  &::after {
    content: "";
    display: block;
    margin-top: ${(p) => (p.$bar ? 3 : 0)}px;
    height: 5px;
    background: ${(p) => (p.$faint ? "#a9a9a9" : "#111")};
    clip-path: ${(p) => (p.$up ? "polygon(50% 0, 100% 100%, 0 100%)" : "polygon(0 0, 100% 0, 50% 100%)")};
  }
`;

const IconButton = styled.button<{ $w?: number; $on?: boolean }>`
  display: grid;
  place-items: center;
  flex: none;
  width: ${(p) => p.$w ?? 24}px;
  height: 28px;
  ${(p) => p.$on && css`
    background: #c9e6ea;
    border: 1px solid #b2d8de;
    margin: 0 1px;
    height: 23px;
  `}
`;

const Rule = styled.span<{ $h?: number }>`
  flex: none;
  width: 1px;
  height: ${(p) => p.$h ?? 34}px;
  background: ${line};
`;

/* ---------- title bar ---------- */

const Shell = styled.div`
  height: 100vh;
  min-height: 600px;
  display: flex;
  flex-direction: column;
  background: #fff;
`;

const TitleBar = styled.header`
  display: flex;
  align-items: center;
  justify-content: space-between;
  height: 34px;
  flex: none;
  padding: 0 3px 0 4px;
`;

const QuickBar = styled.div`
  display: flex;
  align-items: center;
  gap: 5px;
  padding-right: 8px;
  font-size: 17px;
`;

const Brand = styled.span`
  width: 40px;
  font: bold 26px/28px "Liberation Sans", sans-serif;
  color: #8795a1;
`;

const TextButton = styled.button`
  display: flex;
  align-items: center;
  gap: 5px;
  white-space: nowrap;
  line-height: 22px;
`;

const AppTitle = styled.h1`
  margin: 0;
  font-size: 18px;
  font-weight: 400;
`;

const TitleRight = styled.div`
  display: flex;
  align-items: center;
  gap: 10px;
`;

const Maker = styled.span`
  font: bold 18px/20px "Open Sans", sans-serif;
  color: #0b8d87;
  margin-right: 16px;
`;

const LoadBar = styled.div`
  position: absolute;
  top: 0;
  left: 50%;
  width: 362px;
  height: 2px;
  margin-left: -179px;
  background: linear-gradient(90deg, #0a74cc 72px, #dcdcdc 72px);
`;

/* ---------- tabs ---------- */

const TabRow = styled.nav`
  display: flex;
  align-items: stretch;
  height: 38px;
  flex: none;
  background: #dadada;
  font-size: 20px;
`;

const Tab = styled.button<{ $kind?: "file" | "active" }>`
  padding: 0 12px 0 13px;
  white-space: nowrap;
  ${(p) => p.$kind === "file" && css`
    width: 71px;
    color: #fff;
    background: ${tabBlue};
  `}
  ${(p) => p.$kind === "active" && css`
    width: 84px;
    color: ${teal};
    background: #fff;
    border: solid #b5b5b5;
    border-width: 1px 1px 0;
  `}
`;

const TabTools = styled.div`
  display: flex;
  align-items: center;
  gap: 11px;
  margin-left: auto;
  padding-right: 5px;
`;

const SearchBox = styled.label`
  display: flex;
  align-items: center;
  width: 179px;
  height: 27px;
  padding: 0 5px 0 4px;
  background: #fff;
  border: 1px solid #a5a5a5;
`;

const SearchInput = styled.input`
  flex: 1;
  min-width: 0;
  border: 0;
  padding: 0;
  outline: 0;
  font-size: 16px;
  &::placeholder { color: #9d9d9d; opacity: 1; }
`;

/* ---------- ribbon ---------- */

const Ribbon = styled.div`
  display: flex;
  height: 117px;
  flex: none;
  padding: 5px 0;
  border-bottom: 1px solid #c9cdd0;
`;

const GroupBox = styled.section<{ $w?: number }>`
  display: flex;
  flex-direction: column;
  flex: ${(p) => (p.$w ? `0 0 ${p.$w}px` : "1 1 0")};
  min-width: 0;
  border-right: ${(p) => (p.$w ? `1px solid ${line}` : "0")};
`;

const GroupBody = styled.div<{ $pad?: number }>`
  display: flex;
  align-items: flex-start;
  flex: 1;
  padding-left: ${(p) => p.$pad ?? 0}px;
`;

const GroupFoot = styled.div`
  display: flex;
  align-items: center;
  height: 14px;
  padding: 0 9px 0 3px;
  color: ${teal};
  line-height: 14px;
  white-space: nowrap;
`;

const FootName = styled.span<{ $left?: boolean }>`
  flex: 1;
  min-width: 0;
  padding-right: ${(p) => (p.$left ? 0 : 7)}px;
  text-align: ${(p) => (p.$left ? "left" : "center")};
`;

const Tall = styled.button<{ $w: number; $top?: number }>`
  display: flex;
  flex-direction: column;
  align-items: center;
  gap: 5px;
  flex: none;
  width: ${(p) => p.$w}px;
  padding-top: ${(p) => p.$top ?? 0}px;
  line-height: 22px;
`;

const TallText = styled.span`
  display: flex;
  flex-direction: column;
  align-items: center;
  white-space: nowrap;
`;

const Line = styled.span`
  display: flex;
  align-items: center;
  justify-content: center;
  gap: 5px;
  height: 22px;
`;

const Boxed = styled.span`
  display: grid;
  place-items: center;
  width: 38px;
  height: 34px;
  margin-bottom: -2px;
  border: 1px solid #dadde2;
  border-radius: 3px;
`;

const List = styled.div<{ $w: number }>`
  display: flex;
  flex-direction: column;
  gap: 7px;
  flex: none;
  width: ${(p) => p.$w}px;
  padding-left: 6px;
`;

const ListItem = styled(TextButton)`
  height: 22px;
`;

const Gallery = styled.div`
  display: grid;
  grid-template-columns: 1fr 1fr;
  grid-template-rows: 1fr 1fr;
  place-items: center;
  width: 84px;
  height: 86px;
  border: 1px solid ${line};
`;

const GalleryNav = styled.div`
  display: flex;
  flex-direction: column;
  align-items: center;
  justify-content: space-around;
  width: 26px;
  height: 88px;
`;

const ToolRow = styled.div`
  display: flex;
  align-items: center;
  height: 32px;
`;

const ToolRows = styled.div`
  padding-top: 2px;
`;

const SlotRule = styled.span`
  width: 1px;
  height: 20px;
  margin: 0 2px;
  background: ${line};
`;

const AssemblyList = styled.div`
  display: flex;
  flex-direction: column;
  gap: 17px;
  flex: 1;
  padding: 11px 0 0 13px;
`;

const AssemblyItem = styled(TextButton)<{ $off?: boolean }>`
  height: 22px;
  gap: 5px;
  color: ${(p) => (p.$off ? "#b9b9b9" : ink)};
`;

const Foot = ({ name, left }: { name: string; left?: boolean }) => (
  <GroupFoot>
    <FootName $left={left}>{name}</FootName>
    <Caret />
  </GroupFoot>
);

const Tools = ({ rows }: { rows: string[] }) => (
  <ToolRows>
    {rows.map((r, i) => (
      <ToolRow key={i}>
        {r.split(" ").map((n, j) =>
          n === "|" ? <SlotRule key={j} /> : (
            <IconButton key={j} $w={23} aria-label={n}><Icon n={n} /></IconButton>
          )
        )}
      </ToolRow>
    ))}
  </ToolRows>
);

const ToolGroup = ({ w, name, rows, center }: { w: number; name: string; rows: string[]; center?: boolean }) => (
  <GroupBox $w={w}>
    <GroupBody $pad={4}><Tools rows={rows} /></GroupBody>
    <Foot name={name} left={!center} />
  </GroupBox>
);

const MoreButton = ({ icon }: { icon: string }) => (
  <Tall $w={44}>
    <Boxed><Icon n={icon} s={16} /></Boxed>
    <TallText><Line>More</Line><Line><Caret /></Line></TallText>
  </Tall>
);

const RibbonBar = () => (
  <Ribbon>
    <GroupBox $w={192}>
      <GroupBody>
        <Tall $w={76}><BigIcon n="sketch" /><TallText><Line>Sketch</Line></TallText></Tall>
        <Gallery>
          {["profile", "rectangle", "segment", "arc"].map((n) => (
            <IconButton key={n} aria-label={n}><Icon n={n} s={22} /></IconButton>
          ))}
        </Gallery>
        <GalleryNav><Caret $up $faint /><Caret /><Caret $bar /></GalleryNav>
      </GroupBody>
      <Foot name="Direct Sketch" />
    </GroupBox>

    <GroupBox $w={558}>
      <GroupBody $pad={9}>
        <Tall $w={64}><BigIcon n="datum" /><TallText><Line>Datum</Line><Line>Plane <Caret /></Line></TallText></Tall>
        <Tall $w={64}><BigIcon n="extrude" /><TallText><Line>Extrude</Line><Line><Caret /></Line></TallText></Tall>
        <Tall $w={44}><BigIcon n="hole" /><TallText><Line>Hole</Line></TallText></Tall>
        <List $w={149}>
          <ListItem><Icon n="pattern" />Pattern Feature</ListItem>
          <ListItem><Icon n="unite" />Unite&nbsp;<Caret /></ListItem>
          <ListItem><Icon n="shell" />Shell</ListItem>
        </List>
        <Tall $w={64}><BigIcon n="blend" /><TallText><Line>Edge</Line><Line>Blend <Caret /></Line></TallText></Tall>
        <List $w={114}>
          <ListItem><Icon n="chamfer" />Chamfer</ListItem>
          <ListItem><Icon n="trim" />Trim Body</ListItem>
          <ListItem><Icon n="draft" />Draft</ListItem>
        </List>
        <MoreButton icon="pad" />
      </GroupBody>
      <Foot name="Feature" />
    </GroupBox>

    <GroupBox $w={141}>
      <GroupBody $pad={3}>
        <Tall $w={60}><BigIcon n="moveFace" /><TallText><Line>Move</Line><Line>Face</Line></TallText></Tall>
        <List $w={28}>
          {["faceCopy", "faceAlign", "faceDelete"].map((n) => (
            <ListItem key={n} aria-label={n}><Icon n={n} /></ListItem>
          ))}
        </List>
        <MoreButton icon="cycle" />
      </GroupBody>
      <Foot name="Synchronous..." left />
    </GroupBox>

    <ToolGroup w={104} name="Standar..." rows={["redBoxes layersGreen layersBlue | folderTilt", "checkBlue checkWrench checkGold | export"]} />
    <ToolGroup w={52} name="G..." rows={["gearA gearB", "handList"]} />
    <ToolGroup w={58} name="Sp..." rows={["springV springD", "ring | springCut"]} />
    <ToolGroup w={52} name="M..." rows={["checkParts partTree", "gridBolt compass"]} />
    <ToolGroup w={98} name="Modeli..." rows={["delta tableRed noteCross noteGear", "doc dimBrush | bino"]} />
    <ToolGroup w={29} name="." rows={["goldStack", "goldStack"]} />
    <ToolGroup
      w={289}
      name="Dimension Style - GC Toolkits"
      center
      rows={["dimShape | xPlain tolA tolB tolC tolD xBox xParen h7 h7a h7b h7c", "slash note | diaA diaB back"]}
    />

    <GroupBox $w={66}>
      <GroupBody>
        <Tall $w={65} $top={11}><BigIcon n="surface" s={30} /><TallText><Line>Surface</Line><Line><Caret /></Line></TallText></Tall>
      </GroupBody>
    </GroupBox>

    <GroupBox $w={216}>
      <GroupBody>
        <AssemblyList>
          <AssemblyItem $off><BigIcon n="workOn" s={22} />Work on Assembly</AssemblyItem>
          <AssemblyItem><BigIcon n="add" s={22} />Add&nbsp;<Caret /></AssemblyItem>
        </AssemblyList>
        <List $w={33}>
          {["mirror", "moveComp", "addRow"].map((n) => (
            <ListItem key={n} aria-label={n}><Icon n={n} /></ListItem>
          ))}
        </List>
      </GroupBody>
      <Foot name="Assemblies" />
    </GroupBox>
    <GroupBox>
      <GroupBody />
      <Foot name="" />
    </GroupBox>
  </Ribbon>
);

/* ---------- selection bar ---------- */

const SelectionBar = styled.div`
  display: flex;
  align-items: center;
  height: 39px;
  flex: none;
  border-bottom: 1px solid #8f8f8f;
`;

const MenuButton = styled(TextButton)`
  width: 93px;
  padding-left: 10px;
  gap: 4px;
`;

const Pickers = styled.div`
  display: flex;
  gap: 9px;
  padding-left: 11px;
`;

const Picker = styled.span<{ $w: number }>`
  position: relative;
  width: ${(p) => p.$w}px;
  ${Caret} {
    position: absolute;
    right: 8px;
    top: 10px;
    width: 12px;
    height: 7px;
    pointer-events: none;
    &::after { height: 7px; }
  }
`;

const Select = styled.select`
  display: block;
  appearance: none;
  width: 100%;
  height: 27px;
  padding: 0 6px;
  background: #fff;
  border: 1px solid #9b9b9b;
  border-radius: 0;
`;

const SnapGroup = styled.div<{ $lead: number }>`
  display: flex;
  align-items: center;
  padding: 0 6px 0 ${(p) => p.$lead}px;
`;

const DropArrow = styled.button<{ $w: number }>`
  display: grid;
  place-items: center;
  width: ${(p) => p.$w}px;
  height: 28px;
`;

const Snaps = ({ items, caret, lead = 7 }: { items: string; caret: number; lead?: number }) => (
  <SnapGroup $lead={lead}>
    {items.split(" ").map((n, i) => {
      if (n === "v") return <DropArrow key={i} $w={caret} aria-label="options"><Caret /></DropArrow>;
      const on = n.startsWith("+");
      const name = on ? n.slice(1) : n;
      return (
        <IconButton key={i} $w={on ? 23 : 25} $on={on} aria-label={name} aria-pressed={on}>
          <Icon n={name} s={17} />
        </IconButton>
      );
    })}
  </SnapGroup>
);

const EndArrow = styled.button`
  margin: 12px 4px 0 auto;
`;

/* ---------- workspace ---------- */

const Workspace = styled.main`
  display: flex;
  flex: 1;
  min-height: 0;
`;

const ResourceBar = styled.aside`
  display: flex;
  flex-direction: column;
  align-items: center;
  flex: none;
  width: 32px;
  background: #dcdcdc;
  border-right: 1px solid #a9a9a9;
  padding-top: 2px;
`;

const ResourceTab = styled.button<{ $h?: number; $on?: boolean; $gap?: boolean }>`
  display: grid;
  place-items: center;
  flex: none;
  height: ${(p) => p.$h ?? 42}px;
  margin-top: ${(p) => (p.$gap ? 12 : 0)}px;
  width: 29px;
  padding-left: 2px;
  ${(p) => p.$on && css`
    background: #fff;
    border: 1px solid #a9a9a9;
    border-right: 0;
    margin-right: -2px;
  `}
`;

const Navigator = styled.aside`
  display: flex;
  flex-direction: column;
  flex: none;
  width: 378px;
  padding: 0 9px 0 7px;
  border-right: 2px solid #a5a5a5;
`;

const NavHead = styled.div`
  display: flex;
  align-items: center;
  justify-content: space-between;
  height: 35px;
  flex: none;
  padding: 2px 7px 0 3px;
  font-size: 17px;
`;

const Restore = styled.button`
  width: 16px;
  height: 15px;
  border: 1px solid #222;
  border-top-width: 3px;
`;

const TreeFrame = styled.div`
  flex: 1;
  min-height: 0;
  overflow: hidden;
  border: 1px solid #dcdcdc;
  border-bottom: 0;
`;

const Tree = styled.table`
  width: 100%;
  table-layout: fixed;
  border-collapse: separate;
  border-spacing: 0;
  font-size: 17px;
`;

const Th = styled.th<{ $w?: number }>`
  width: ${(p) => (p.$w ? `${p.$w}px` : "auto")};
  height: 30px;
  padding: 0 6px;
  background: #efefef;
  border-right: 1px solid ${line};
  border-bottom: 1px solid ${line};
  font-weight: 400;
  text-align: left;
  white-space: nowrap;
  overflow: hidden;
`;

const SortMark = styled.span`
  display: inline-block;
  width: 14px;
  height: 8px;
  margin: 0 0 2px 16px;
  background: #111;
  clip-path: polygon(50% 0, 100% 100%, 0 100%);
`;

const Tr = styled.tr`
  &:nth-child(even) { background: #f8f8f8; }
`;

const Td = styled.td<{ $edge?: boolean }>`
  height: 28px;
  padding: 0;
  border-right: 1px solid ${(p) => (p.$edge ? "#111" : "#e6e6e6")};
  border-bottom: 1px solid #e9e9e9;
  overflow: hidden;
  white-space: nowrap;
`;

const Flag = styled.span`
  display: block;
  padding-left: 4px;
`;

const Node = styled.label<{ $pad: number; $bold?: boolean; $off?: boolean }>`
  display: flex;
  align-items: center;
  height: 27px;
  gap: 3px;
  padding-left: ${(p) => p.$pad}px;
  line-height: 27px;
  font-weight: ${(p) => (p.$bold ? 700 : 400)};
  font-size: ${(p) => (p.$bold ? 18 : 17)}px;
  color: ${(p) => (p.$off ? "#ababab" : ink)};
`;

const Guide = styled.span<{ $from?: number; $to?: number }>`
  position: relative;
  flex: none;
  align-self: stretch;
  width: 8px;
  &::before, &::after { content: ""; position: absolute; left: 0; }
  &::before {
    top: ${(p) => p.$from ?? 0}px;
    height: ${(p) => p.$to ?? 28}px;
    border-left: 1px dotted #8a8a8a;
  }
  &::after { top: 13px; width: 9px; border-top: 1px dotted #8a8a8a; }
`;

const Twist = styled.button<{ $open?: boolean }>`
  flex: none;
  width: 11px;
  height: 11px;
  margin-right: ${(p) => (p.$open ? 3 : 0)}px;
  border: 1px solid #dedede;
  background:
    linear-gradient(#222, #222) center / 9px 1px no-repeat,
    linear-gradient(#222, #222) center / ${(p) => (p.$open ? "0 0" : "1px 9px")} no-repeat,
    #fff;
`;

const Check = styled.input`
  appearance: none;
  flex: none;
  width: 13px;
  height: 13px;
  margin: 0;
  border: 1px solid #222;
  background: #fff;
  &:checked::after {
    content: "";
    display: block;
    width: 100%;
    height: 100%;
    background: #c4202c;
    clip-path: polygon(5% 45%, 25% 32%, 42% 50%, 85% 5%, 100% 20%, 42% 98%);
  }
  &:disabled:checked::after { background: #b0b0b0; }
`;

const ScrollBar = styled.div`
  display: flex;
  align-items: center;
  flex: none;
  height: 25px;
  padding: 0 8px;
  background: #f0f0f0;
  border-left: 1px solid #dcdcdc;
`;

const Thumb = styled.span`
  width: 157px;
  height: 24px;
  margin: 0 auto 0 7px;
  background: #cdcdcd;
`;

const Chevron = styled.svg`
  display: block;
  width: 11px;
  height: 12px;
  fill: none;
  stroke: #444;
  stroke-width: 2.4;
`;

const Splitter = styled.div`
  flex: none;
  height: 6px;
  margin-top: 2px;
  background: #d9d9d9;
  border: solid #a9a9a9;
  border-width: 1px 0;
`;

const Fold = styled.button`
  display: flex;
  align-items: center;
  justify-content: space-between;
  flex: none;
  height: 32px;
  padding: 3px 5px 0 6px;
  border-bottom: 2px solid #cfcfcf;
  font-size: 20px;
  line-height: 24px;
  color: ${teal};
`;

const FoldMark = styled.svg`
  width: 20px;
  height: 16px;
  margin-bottom: 5px;
  fill: #0f5f74;
`;

const NavBottom = styled.div`
  flex: none;
  height: 6px;
`;

interface Row {
  name: string;
  kind: "section" | "root" | "constraints" | "part";
  off?: boolean;
  flag?: "save" | "dotted";
  last?: boolean;
}

const rows: Row[] = [
  { name: "Sections", kind: "section" },
  { name: "ANGLE JIG ASSY. (...", kind: "root", flag: "save" },
  { name: "Constraints", kind: "constraints" },
  { name: "BASE WITH ANGL...", kind: "part", flag: "save" },
  { name: "LOCATING PIN", kind: "part", off: true, flag: "dotted" },
  { name: "RESTING PAD", kind: "part", flag: "dotted" },
  { name: "INCLINED COUPLI...", kind: "part", flag: "dotted" },
  { name: "DRILL PLATE", kind: "part", flag: "save" },
  { name: "JIG LINER", kind: "part", flag: "dotted" },
  { name: "JIG BUSH", kind: "part", flag: "save" },
  { name: "PLATE BOLT", kind: "part", flag: "save", last: true },
];

const TreeNode = ({ row }: { row: Row }) => {
  switch (row.kind) {
    case "section":
      return <Node as="span" $pad={9}><Guide $from={14} $to={14} /><Icon n="folder" />{row.name}</Node>;
    case "root":
      return (
        <Node $pad={4} $bold>
          <Twist $open aria-label="Collapse" />
          <Check type="checkbox" defaultChecked />
          <Icon n="assembly" s={15} />
          {row.name}
        </Node>
      );
    case "constraints":
      return <Node as="span" $pad={23}><Twist aria-label="Expand" /><Icon n="mirror" />{row.name}</Node>;
    default:
      return (
        <Node $pad={28} $off={row.off}>
          <Guide $to={row.last ? 13 : 28} />
          <Check type="checkbox" defaultChecked disabled={row.off} />
          <Icon n="part" s={15} />
          {row.name}
        </Node>
      );
  }
};

const NavigatorPanel = () => (
  <Navigator>
    <NavHead>Assembly Navigator<Restore aria-label="Restore panel" /></NavHead>
    <TreeFrame>
      <Tree>
        <thead>
          <tr>
            <Th $w={233}>Descriptive Part Name<SortMark /></Th>
            <Th $w={59}>Info</Th>
            <Th>Read-only</Th>
          </tr>
        </thead>
        <tbody>
          {rows.map((r) => (
            <Tr key={r.name}>
              <Td $edge><TreeNode row={r} /></Td>
              <Td />
              <Td>{r.flag && <Flag><Icon n={r.flag} /></Flag>}</Td>
            </Tr>
          ))}
          {Array.from({ length: 11 }, (_, i) => (
            <Tr key={i}><Td $edge /><Td /><Td /></Tr>
          ))}
        </tbody>
      </Tree>
    </TreeFrame>
    <ScrollBar>
      <Chevron viewBox="0 0 11 12"><path d="M9 1L3 6l6 5" /></Chevron>
      <Thumb />
      <Chevron viewBox="0 0 11 12"><path d="M2 1l6 5-6 5" /></Chevron>
    </ScrollBar>
    <Splitter />
    {["Preview", "Dependencies"].map((t) => (
      <Fold key={t}>{t}<FoldMark viewBox="0 0 20 16"><path d="M1 1h4l5 9 5-9h4l-8 14h-2z" /></FoldMark></Fold>
    ))}
    <NavBottom />
  </Navigator>
);

/* ---------- graphics window ---------- */

const Stage = styled.section`
  display: flex;
  flex-direction: column;
  flex: 1;
  min-width: 0;
`;

const DocTabs = styled.div`
  display: flex;
  flex: none;
  height: 31px;
  border-bottom: 2px solid ${tabBlue};
`;

const DocTab = styled.button`
  display: flex;
  align-items: center;
  gap: 6px;
  padding: 2px 7px 0 5px;
  color: #fff;
  background: ${tabBlue};
  font-size: 17px;
  white-space: nowrap;
`;

const Canvas = styled.div`
  position: relative;
  flex: 1;
  min-height: 0;
  background: linear-gradient(#b3b3b3, #d4d4d4 46%, #e6e6e6 74%, #e8e8e8);
`;

const Model = styled.svg`
  display: block;
  width: 100%;
  height: 100%;
`;

const Triad = styled.svg`
  position: absolute;
  left: 50px;
  bottom: 46px;
  width: 64px;
  height: 64px;
  overflow: visible;
`;

const Watermark = styled.div`
  position: absolute;
  inset: 0;
  display: flex;
  align-items: center;
  justify-content: center;
  color: #ececec;
  text-shadow: 1px 2px 1px rgba(30, 30, 30, 0.75);
  pointer-events: none;
  white-space: nowrap;
`;

const MarkHan = styled.span`
  padding-bottom: 14px;
  font: 300 78px/96px "Noto Sans CJK SC", sans-serif;
`;

const MarkLatin = styled.span`
  font: 74px/96px "Liberation Serif", serif;
`;

const bolt = (cy: number) => (
  <g>
    <path fill="#2f2f2f" stroke="#333" d={`M765 ${cy}L789 ${cy - 45}H843L867 ${cy}L843 ${cy + 45}H789Z`} />
    <path fill="#6c6c6c" d={`M766 ${cy}L789 ${cy - 44}H843L866 ${cy}L852 ${cy + 25}H780Z`} />
    <circle cx="816" cy={cy} r="44.500" fill="#6d6d6d" stroke="#333" />
  </g>
);

const ModelView = () => (
  <Model viewBox="410 259 1476 734" preserveAspectRatio="xMidYMid meet">
    <defs>
      <linearGradient id="bore" x1="0" y1="0" x2="0" y2="1">
        <stop offset="0" stopColor="#5f4512" />
        <stop offset=".25" stopColor="#7d5c1c" />
        <stop offset=".8" stopColor="#eeb23d" />
        <stop offset="1" stopColor="#f1b540" />
      </linearGradient>
      <linearGradient id="smallBore" x1="0" y1="0" x2="0" y2="1">
        <stop offset="0" stopColor="#8a661c" />
        <stop offset="1" stopColor="#f1b540" />
      </linearGradient>
      <linearGradient id="barrel" x1="0" y1="0" x2="0" y2="1">
        <stop offset="0" stopColor="#f0b23c" />
        <stop offset=".3" stopColor="#f0b23c" />
        <stop offset=".85" stopColor="#7a5a18" />
        <stop offset="1" stopColor="#5a420f" />
      </linearGradient>
      <linearGradient id="rim" x1="0" y1="0" x2="0" y2="1">
        <stop offset="0" stopColor="#f3b040" />
        <stop offset=".3" stopColor="#ffe36a" />
        <stop offset=".65" stopColor="#b08426" />
        <stop offset="1" stopColor="#5f4715" />
      </linearGradient>
      <linearGradient id="innerRim" x1="0" y1="0" x2="0" y2="1">
        <stop offset="0" stopColor="#5f4512" />
        <stop offset=".5" stopColor="#c79530" />
        <stop offset=".85" stopColor="#ffe36a" />
        <stop offset="1" stopColor="#e0a93a" />
      </linearGradient>
    </defs>
    <path fill="#525252" stroke="#2c2c2c" strokeWidth="2" d="M778 354H1483L1513 383V884L1483 913H778L749 884V383Z" />
    <path stroke="#303030" fill="none" d="M775 357H1486M1509 380V886M753 380V886" />
    <path fill="#3a3a3a" d="M749 383h4v501h-4z" />
    <path fill="#1f1f1f" d="M774 909H1487L1483 914H778Z" />

    <path fill="url(#barrel)" d="M1289 547H1342V719H1289Z" />
    <ellipse cx="1341" cy="633" rx="53" ry="86" fill="url(#rim)" stroke="#4a3610" strokeWidth="1.200" />
    <ellipse cx="1342" cy="633" rx="51" ry="82" fill="#c4922e" stroke="#4a3610" strokeWidth="1.200" />
    <ellipse cx="1341" cy="633" rx="39" ry="60" fill="url(#innerRim)" stroke="#33250a" strokeWidth="1.200" />
    <ellipse cx="1339" cy="631" rx="36" ry="58" fill="url(#bore)" stroke="#4a3610" />

    <path fill="#3a3a3a" d="M766 815H1266L1261 820H767Z" />
    <path fill="#a3a3a3" stroke="#2c2c2c" strokeWidth="1.500" d="M767 447H1261L1288 476V791L1264 816H767Z" />
    <path fill="#d2d2d2" d="M768 448h493l3 3H768z" />
    <path stroke="#333" fill="none" d="M768 451.500H1264M1285.500 474V794" />
    <path stroke="#7a7a7a" fill="none" d="M768 811h501" />

    {bolt(525)}
    {bolt(749)}

    <circle cx="1159" cy="633" r="55.500" fill="#868686" stroke="#2e2e2e" strokeWidth="2" />
    <circle cx="1159" cy="633" r="53" fill="none" stroke="#707070" strokeWidth=".8" />
    <circle cx="1159" cy="633" r="30.500" fill="url(#smallBore)" stroke="#2e2e2e" strokeWidth="2" />
    <path fill="#d89a30" d="M1145 607Q1130 616 1130 634Q1132 652 1145 658Q1150 633 1145 607Z" />
    <path stroke="#33250a" fill="none" d="M1145 607Q1151 633 1145 659" />

    <path fill="#86d69b" stroke="#5aa86e" strokeWidth=".6" d="M1130 579l3 14-2 40h-1l-2-40z" />
    <path fill="#f0a5a0" stroke="#c47a70" strokeWidth=".6" d="M1131 632l30-1 24 2-24 3-30-2z" />
    <path fill="#2448a8" d="M1127 627h4v12h-4z" />
    <g fontFamily="Liberation Sans, Arial, sans-serif" fontSize="13">
      <text x="1136" y="576" fill="#3a8f46">YC</text>
      <text x="1173" y="629" fill="#d2432c">XC</text>
      <text x="1131" y="633" fill="#2a3fae">ZC</text>
    </g>
  </Model>
);

const ViewTriad = () => (
  <Triad viewBox="0 0 64 64">
    <path fill="#d2d2d2" stroke="#aaa" d="M12 22h23v24H12z" />
    <path stroke="#3d8f46" strokeWidth="2" d="M10 47V14" />
    <path fill="#3d8f46" d="M10 6l3 12H7z" />
    <path stroke="#c43c3c" strokeWidth="2" d="M10 47h28" />
    <path fill="#c43c3c" d="M50 47l-14-3v6z" />
    <path fill="#1848c0" d="M7 43h6v8H7z" />
    <g fontFamily="Liberation Sans, Arial, sans-serif" fontSize="13">
      <text x="6" y="5" fill="#3d8f46">Y</text>
      <text x="52" y="51" fill="#c43c3c">X</text>
    </g>
  </Triad>
);

const ToolStrip = styled.aside`
  display: flex;
  flex-direction: column;
  align-items: center;
  flex: none;
  width: 30px;
  padding: 6px 0 6px 2px;
`;

const StripButton = styled.button<{ $h: number }>`
  display: grid;
  place-items: center;
  flex: none;
  height: ${(p) => p.$h}px;
`;

const StripRule = styled.span`
  width: 26px;
  height: 1px;
  margin-top: 4px;
  background: ${line};
`;

const SideArrow = styled.button`
  width: 5px;
  height: 10px;
  margin: auto 5px 0 0;
  background: #111;
  clip-path: polygon(100% 0, 100% 100%, 0 50%);
`;

const StatusBar = styled.footer`
  display: flex;
  align-items: center;
  flex: none;
  height: 24px;
  padding: 0 22px 0 3px;
  border-top: 1px solid #a5a5a5;
  font-weight: 700;
  line-height: 22px;
`;

const StatusIcons = styled.span`
  display: flex;
  gap: 6px;
  margin-left: auto;
`;

const tabs = ["Assemblies", "Curve", "Surface", "Analysis", "View", "Render", "Tools", "PMI", "Application", "Animation Designer"];

export default function App() {
  return (
    <Shell>
      <Global />
      <LoadBar />
      <TitleBar>
        <QuickBar>
          <Brand>NX</Brand>
          <Rule />
          <IconButton $w={22} aria-label="Save"><Icon n="save" s={15} /></IconButton>
          <Rule />
          <IconButton $w={18} aria-label="Undo"><Icon n="undo" s={14} /></IconButton>
          <Caret $faint />
          <IconButton $w={20} aria-label="Redo"><Icon n="redo" s={14} /></IconButton>
          <Rule />
          {["cut", "copy", "paste", "orbit"].map((n) => (
            <IconButton key={n} $w={18} aria-label={n}><Icon n={n} s={16} /></IconButton>
          ))}
          <Rule />
          <IconButton $w={18} aria-label="Spline"><Icon n="spline" /></IconButton>
          <Caret />
          <Rule />
          <IconButton $w={22} aria-label="Clear"><Icon n="eraser" /></IconButton>
          <Rule />
          <TextButton><Icon n="switchWin" />Switch Window</TextButton>
          <TextButton><Icon n="windowPane" />Window<Caret /></TextButton>
          <Caret $bar />
        </QuickBar>
        <AppTitle>NX 12 - Modeling</AppTitle>
        <TitleRight>
          <Maker>SIEMENS</Maker>
          <IconButton aria-label="Minimize">
            <Glyph $size={16} viewBox="0 0 16 16"><path stroke="#222" strokeWidth="2" d="M4 12.500h8" /></Glyph>
          </IconButton>
          <IconButton aria-label="Restore">
            <Glyph $size={16} viewBox="0 0 16 16"><path stroke="#222" strokeWidth="1.200" d="M2.500 6.500h8v6h-8zM2.500 8.500h8M5.500 6V3.500h8v6H11" /></Glyph>
          </IconButton>
          <IconButton aria-label="Close">
            <Glyph $size={16} viewBox="0 0 16 16"><path stroke="#222" strokeWidth="1.500" d="M3 3l10 10M13 3L3 13" /></Glyph>
          </IconButton>
        </TitleRight>
      </TitleBar>

      <TabRow>
        <Tab $kind="file">File</Tab>
        <Tab $kind="active">Home</Tab>
        {tabs.map((t) => <Tab key={t}>{t}</Tab>)}
        <TabTools>
          <SearchBox>
            <SearchInput placeholder="Find a Command" aria-label="Find a Command" />
            <Icon n="magnifier" />
          </SearchBox>
          <Icon n="fullscreen" />
          <Icon n="chevrons" s={15} />
          <Icon n="help" s={15} />
        </TabTools>
      </TabRow>

      <RibbonBar />

      <SelectionBar>
        <MenuButton><Icon n="menu" /><span><u>M</u>enu</span><Caret /></MenuButton>
        <Rule />
        <Pickers>
          <Picker $w={193}><Select aria-label="Selection filter"><option>No Selection Filter</option></Select><Caret /></Picker>
          <Picker $w={202}><Select aria-label="Selection scope"><option>Entire Assembly</option></Select><Caret /></Picker>
        </Pickers>
        <Snaps
          lead={4}
          caret={12}
          items="greyPart greyHook redFilter v greyTurn greyBars targetRed marquee v shadeCube blueGlass +snap +ends +mid sCurve +zig +wave fan +circleDot circleRed +plus +onCurve bluePatch violetPatch gridDark"
        />
        <Rule />
        <Snaps caret={16} lead={10} items="fitView zoomWin rotate paint treeGrey layout v orient v shaded v arrowsRG v" />
        <Rule />
        <Snaps caret={12} items="clip greyDim greyBalance greyBook greenPatch v redPatch" />
        <Rule />
        <EndArrow aria-label="Toolbar options"><Caret /></EndArrow>
      </SelectionBar>

      <Workspace>
        <ResourceBar>
          <ResourceTab $h={22} aria-label="Options"><Icon n="gear" s={15} /></ResourceTab>
          <ResourceTab $gap $h={48} aria-label="gears"><BigIcon n="gears" s={23} /></ResourceTab>
          <ResourceTab $on $h={44} aria-label="navTree"><BigIcon n="navTree" s={24} /></ResourceTab>
          {["constraint", "partNav", "books"].map((n) => (
            <ResourceTab key={n} aria-label={n}><BigIcon n={n} s={23} /></ResourceTab>
          ))}
          {["info", "webDoc", "clock"].map((n) => (
            <ResourceTab key={n} $gap aria-label={n}><BigIcon n={n} s={24} /></ResourceTab>
          ))}
          {["rainbow", "wand", "robot"].map((n) => (
            <ResourceTab key={n} aria-label={n}><BigIcon n={n} s={23} /></ResourceTab>
          ))}
        </ResourceBar>
        <NavigatorPanel />
        <Stage>
          <DocTabs>
            <DocTab>
              <Icon n="partDoc" />
              ANGLE JIG ASSY..prt
              <Glyph $size={11} viewBox="0 0 16 16"><path stroke="#fff" strokeWidth="2.200" d="M8 14H2V2h7l4 4M7 7h7v6H9" /></Glyph>
              <Glyph $size={9} viewBox="0 0 16 16"><path stroke="#fff" strokeWidth="4" d="M2 2l12 12M14 2L2 14" /></Glyph>
            </DocTab>
          </DocTabs>
          <Canvas>
            <ModelView />
            <ViewTriad />
          </Canvas>
        </Stage>
        <ToolStrip>
          <StripButton $h={32} aria-label="surface"><BigIcon n="surface" s={22} /></StripButton>
          <Caret />
          <StripButton $h={42} aria-label="bend"><BigIcon n="bend" s={23} /></StripButton>
          <StripButton $h={26} aria-label="goldBlock"><BigIcon n="goldBlock" s={21} /></StripButton>
          <StripButton $h={36} aria-label="sheetArrows"><BigIcon n="sheetArrows" s={23} /></StripButton>
          <StripButton $h={32} aria-label="drafting"><BigIcon n="drafting" s={23} /></StripButton>
          <StripRule />
          <SideArrow aria-label="Collapse toolbar" />
        </ToolStrip>
      </Workspace>

      <StatusBar>
        Select objects and use MB3, or double-click an object
        <StatusIcons><Icon n="grayTree" /><Icon n="fullscreen" /><span /><Icon n="globe" /></StatusIcons>
      </StatusBar>
      <Watermark><MarkHan>莫西网</MarkHan><MarkLatin>www.3dmox.com</MarkLatin></Watermark>
    </Shell>
  );
}
